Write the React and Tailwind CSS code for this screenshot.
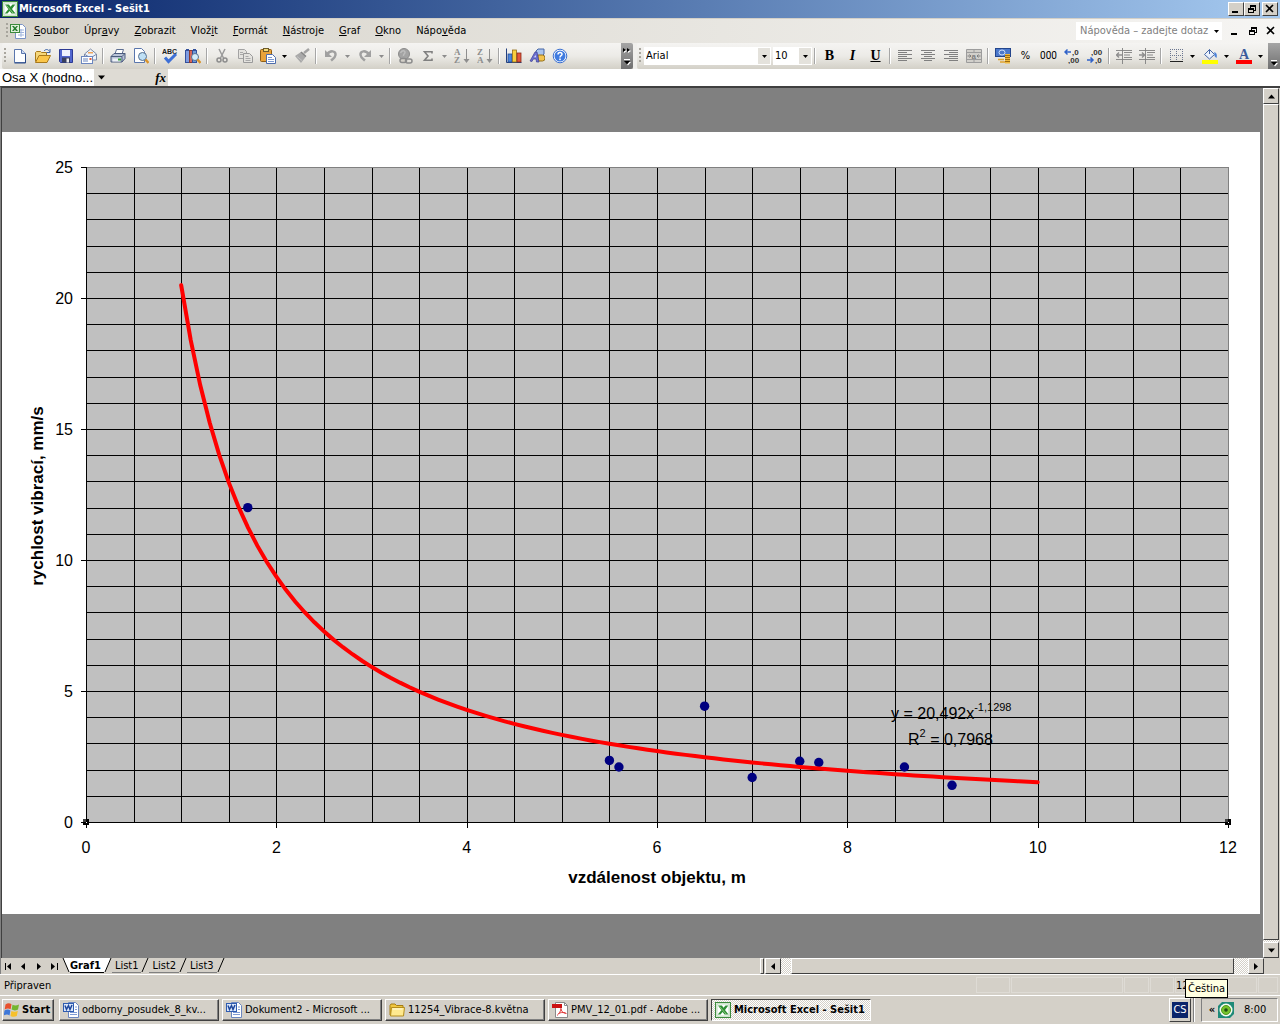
import React, { useState } from "react";

const raised = "border border-t-white border-l-white border-r-[#404040] border-b-[#404040] bg-[#d4d0c8]";
const checker = "bg-[repeating-conic-gradient(#ffffff_0_25%,#d4d0c8_0_50%)] bg-[length:2px_2px]";

const Icon = ({ children, size = 16, box = 16 }) => (
  <svg width={size} height={size} viewBox={`0 0 ${box} ${box}`} fill="none" className="shrink-0" aria-hidden="true">
    {children}
  </svg>
);

const ExcelIcon = ({ size = 16 }) => (
  <Icon size={size}>
    <rect x="0.5" y="0.5" width="15" height="15" fill="#e6f2e2" stroke="#3c8a3c" />
    <rect x="2" y="2" width="12" height="12" fill="#fff" stroke="#9cc79a" strokeWidth="0.6" />
    <path d="M3 3.500h4l1.500 2.300L10.500 3.500h2.800L10 8l3.500 4.500H9.500L7.600 10 5.500 12.500H2.700L6.400 8.200z" fill="#2f8f35" />
    <path d="M4.500 4.500l6.500 7.500" stroke="#8cca7c" />
  </Icon>
);

const WorkbookIcon = () => (
  <Icon>
    <path d="M5.500 1.500h7l3 3v11h-10z" fill="#fff" stroke="#7a93c6" />
    <path d="M8 7h6M8 9.500h6M8 12h6M11 6v8" stroke="#9fb4dc" />
    <rect x="0.500" y="1.500" width="9" height="8" fill="#dff0da" stroke="#3c8a3c" />
    <path d="M2 3h2l1 1.500L6.500 3H8L6 5.500 8 8H6L5 6.700 3.700 8H2l2-2.500z" fill="#237a2b" />
  </Icon>
);

const WordIcon = () => (
  <Icon>
    <path d="M5.500 0.500h7l3 3v12h-10z" fill="#fff" stroke="#6b86bf" />
    <path d="M12 5h2M12 7.500h2M7 10.500h7M7 12.500h7" stroke="#7f9bd4" />
    <rect x="0.500" y="1.500" width="10" height="8" fill="#dbe7fa" stroke="#2f5cb0" />
    <path d="M2 3.500l1.500 4 2-4 1.500 4 2-4.500" stroke="#1d469c" strokeWidth="1.500" />
  </Icon>
);

const FolderIcon = () => (
  <Icon>
    <path d="M1 3.500l1-1.500h4l1.500 1.500H14V13H1z" fill="#f0c63e" stroke="#a67c12" />
    <path d="M2.500 5.500h13L14.500 14H1.500z" fill="#ffe98f" stroke="#b58d1d" />
    <path d="M3.500 7h10" stroke="#fffbe0" />
  </Icon>
);

const PdfIcon = () => (
  <Icon>
    <path d="M3.500 0.500h9l3 3v12h-12z" fill="#fff" stroke="#8a8a8a" />
    <path d="M12.500 0.500v3h3" stroke="#8a8a8a" />
    <rect x="0" y="2" width="10" height="4" fill="#cc1111" />
    <path d="M9 6c0 3-2 6-4 7.500M9 7c.5 3 3 4.500 5.500 4.500M6.500 11.500c2-1 4-1.200 7-.8" stroke="#e23b3b" />
  </Icon>
);

const WindowsIcon = () => (
  <Icon>
    <path d="M1.500 2.500C3.500 1 5.500 1 7.500 2.200L6.600 7.300C4.800 6.200 3 6.200.7 7.400z" fill="#e8502c" />
    <path d="M8.500 2.700c2 1.100 4 1.100 6.500-.2l-1 5c-2.200 1.200-4.300 1.200-6.400.1z" fill="#74b62e" />
    <path d="M.5 8.500c2.300-1.200 4.200-1.200 5.900-.1l-.9 5C3.700 12.200 2 12.400-.3 13.500z" fill="#3f78d8" />
    <path d="M7.400 8.900c2.100 1 4.200 1 6.400-.1l-1 5.200c-2.200 1.100-4.300 1-6.300-.1z" fill="#f6c02c" />
  </Icon>
);

const NewIcon = () => (
  <Icon>
    <path d="M2.500 1.500h7l4 4v9h-11z" fill="#fdfeff" stroke="#5a76ad" />
    <path d="M9.500 1.500v4h4" fill="#cfdcf3" stroke="#5a76ad" />
    <path d="M13.500 6v9h-11" stroke="#2b4a86" />
  </Icon>
);

const OpenIcon = () => (
  <Icon>
    <path d="M.500 13.500v-9l1-1h4l1 1h5v3" fill="#f6d77a" stroke="#a8791b" />
    <path d="M.500 14.500l3.500-7h11.500l-3.500 7z" fill="#fbc64a" stroke="#a8791b" />
    <path d="M9 3c2-2.500 4.500-1.500 5.500.500M15 1v3.500h-3.500" stroke="#3e65a8" />
  </Icon>
);

const SaveIcon = () => (
  <Icon>
    <path d="M1.500 1.500h13v13h-12l-1-1z" fill="#5267cf" stroke="#2c3a94" />
    <rect x="4" y="2" width="8" height="6" fill="#eef3ff" />
    <rect x="4" y="9.500" width="8" height="5" fill="#39405e" />
    <rect x="8.500" y="10.500" width="2.500" height="4" fill="#f1f1f1" />
  </Icon>
);

const MailIcon = () => (
  <Icon>
    <path d="M3.500 6l6-5 6 5v6h-12z" fill="#eef2fa" stroke="#7d8aa5" />
    <path d="M4 6.500l5.500 3.500L15 6.500" stroke="#7d8aa5" />
    <rect x="7" y="4" width="5" height="1.500" fill="#f0a55a" />
    <rect x="0.500" y="8.500" width="11" height="7" fill="#fff" stroke="#6b86bf" />
    <path d="M2 11h5M2 13h5" stroke="#6b86bf" />
    <rect x="8.500" y="10" width="2" height="2" fill="#e05c3a" />
  </Icon>
);

const PrintIcon = () => (
  <Icon>
    <path d="M5 6l1.500-4.500h7L12 6z" fill="#fff" stroke="#5e6f93" />
    <path d="M1 8.500l3-3h11v5l-3 3.500H1z" fill="#b9c4d8" stroke="#4c5c7e" />
    <path d="M1 8.500h11l3-3M12 8.500V14" stroke="#4c5c7e" />
    <path d="M2.500 10.500h8v3h-8z" fill="#eef1f7" />
    <path d="M8 11.500h3" stroke="#36a336" strokeWidth="2" />
  </Icon>
);

const PreviewIcon = () => (
  <Icon>
    <path d="M1.500.500h7l3 3v11h-10z" fill="#fff" stroke="#5a76ad" />
    <circle cx="9.500" cy="8.500" r="4" fill="#bfe0f5" stroke="#56708f" />
    <path d="M12.500 11.500l3 3.500" stroke="#d9932b" strokeWidth="2.500" />
  </Icon>
);

const SpellIcon = () => (
  <Icon>
    <text x="0" y="6" fontSize="7" fontWeight="700" fontFamily="Liberation Sans, sans-serif" fill="#222">ABC</text>
    <path d="M3 9.500l3.500 4L14 6" stroke="#3d6fd6" strokeWidth="3" />
  </Icon>
);

const ResearchIcon = () => (
  <Icon>
    <path d="M1 1.500h3M8 1.500h3" stroke="#33509c" />
    <rect x="0.500" y="2.500" width="4" height="12" fill="#7f9be0" stroke="#33509c" />
    <rect x="4.500" y="2.500" width="3" height="12" fill="#d8695b" stroke="#8c3a30" />
    <rect x="7.500" y="2.500" width="4" height="12" fill="#6f9ad6" stroke="#33509c" />
    <circle cx="10" cy="9" r="3.500" fill="#d3ecfa" stroke="#56708f" />
    <path d="M12.500 11.500l3 3.500" stroke="#d9932b" strokeWidth="2.500" />
  </Icon>
);

const CutIcon = () => (
  <Icon>
    <path d="M5 1l4.500 9M11 1L6.500 10" stroke="#9a9a9a" strokeWidth="1.500" />
    <circle cx="5" cy="12" r="2" stroke="#8c8c8c" strokeWidth="1.500" />
    <circle cx="11" cy="12" r="2" stroke="#8c8c8c" strokeWidth="1.500" />
  </Icon>
);

const CopyIcon = () => (
  <Icon>
    <path d="M1.500 1.500h6l2 2v7h-8z" fill="#e4e3df" stroke="#a3a3a3" />
    <path d="M6.500 5.500h6l3 3v6h-9z" fill="#e4e3df" stroke="#9a9a9a" />
    <path d="M3 4.500h3M3 6.500h3M8.500 8.500h3M8.500 10.500h5M8.500 12.500h5" stroke="#a9a9a9" />
  </Icon>
);

const PasteIcon = () => (
  <Icon>
    <rect x="0.500" y="1.500" width="11" height="12" rx="1" fill="#e9a33a" stroke="#8f5f16" />
    <rect x="3.500" y="0.500" width="5" height="3" fill="#f3dc7c" stroke="#6d5a2a" />
    <path d="M6.500 6.500h6l3 3v6h-9z" fill="#fff" stroke="#4d6cab" />
    <path d="M8 9.500h4M8 11.500h6M8 13.500h6" stroke="#7b98d1" />
  </Icon>
);

const BrushIcon = () => (
  <Icon>
    <path d="M15 1l-5 4" stroke="#a3a3a3" strokeWidth="2.500" />
    <path d="M1 8l6-4 5 4.500-5 6.500z" fill="#a9a9a9" />
    <path d="M7 4l5 4.500" stroke="#858585" strokeWidth="1.500" />
    <path d="M3 8.500l5 4" stroke="#c2c2c2" />
  </Icon>
);

const UndoIcon = () => (
  <Icon>
    <path d="M4 6.500c3-4.500 9-4 8.500.500-.2 2.500-2 3.500-4.500 5.500" stroke="#a0a0a0" strokeWidth="2.500" />
    <path d="M2 2v7h7z" fill="#a0a0a0" />
  </Icon>
);

const RedoIcon = () => (
  <Icon>
    <path d="M12 6.500C9 2 3 2.500 3.500 7c.2 2.500 2 3.500 4.500 5.500" stroke="#a0a0a0" strokeWidth="2.500" />
    <path d="M14 2v7H7z" fill="#a0a0a0" />
  </Icon>
);

const LinkIcon = () => (
  <Icon>
    <circle cx="7" cy="6" r="5.500" fill="#a3a3a3" stroke="#8b8b8b" />
    <path d="M3.500 5c1.500-3 4-2.500 4.500-1s-2 2-1.500 4" stroke="#bdbdbd" strokeWidth="1.500" />
    <rect x="3" y="10.500" width="6.500" height="4" rx="2" fill="#d4d0c8" stroke="#8c8c8c" strokeWidth="1.500" />
    <rect x="8.500" y="11" width="6.500" height="4" rx="2" stroke="#8c8c8c" strokeWidth="1.500" />
  </Icon>
);

const SumIcon = () => (
  <Icon>
    <path d="M12 5.500V3.800H4.500L8 8l-3.500 4.200H12v-1.700" stroke="#808080" strokeWidth="1.600" />
  </Icon>
);

const SortIcon = ({ top, bottom }) => (
  <Icon>
    <text x="0" y="7" fontSize="9" fontWeight="700" fontFamily="Liberation Serif, serif" fill="#8e8e8e">{top}</text>
    <text x="0" y="15" fontSize="9" fontWeight="700" fontFamily="Liberation Serif, serif" fill="#8e8e8e">{bottom}</text>
    <path d="M12.500 1v12" stroke="#8e8e8e" />
    <path d="M9.500 11h6l-3 4z" fill="#8e8e8e" />
  </Icon>
);

const ChartIcon = () => (
  <Icon>
    <path d="M0.500 0.500v14h15" stroke="#23407e" />
    <rect x="2" y="6" width="4" height="8" fill="#4c86dc" stroke="#234c94" strokeWidth="0.800" />
    <rect x="6.500" y="2" width="4" height="12" fill="#f8cf3f" stroke="#94701b" strokeWidth="0.800" />
    <rect x="11" y="5" width="4" height="9" fill="#e2553a" stroke="#8c2a1a" strokeWidth="0.800" />
  </Icon>
);

const DrawIcon = () => (
  <Icon>
    <path d="M7 3l2-2h6v5l-2 2H7z" fill="#aac4ee" stroke="#4667a6" />
    <path d="M9 7h4.500a2.500 3 0 010 6H9z" fill="#f3c34e" stroke="#94701b" />
    <path d="M1 13L6 4h2l2 10H7.500l-.4-3H4.300L3 13.500z" fill="#6b6fd0" stroke="#3c3f94" strokeWidth="0.700" />
    <path d="M5.200 9.200h1.600L6.500 7z" fill="#fff" />
  </Icon>
);

const HelpIcon = () => (
  <Icon>
    <circle cx="8" cy="8" r="6.800" fill="#fff" stroke="#3a6fd0" />
    <circle cx="8" cy="8" r="5.500" fill="#3f7be0" />
    <path d="M6 6.500C6 4 10 4 10 6.200 10 7.800 8 7.600 8 9.500" stroke="#fff" strokeWidth="1.500" />
    <rect x="7.200" y="10.500" width="1.600" height="1.600" fill="#fff" />
  </Icon>
);

const AlignIcon = ({ d }) => (
  <Icon>
    <path d={d} stroke="#808080" />
  </Icon>
);

const MergeIcon = () => (
  <Icon>
    <path d="M.500 1.500h15v13H.500zM.500 4.500h15M.500 11.500h15M8 1.500v3M8 11.500v3" fill="#d2d0cb" stroke="#9c9c9c" />
    <path d="M1.500 8H5M11 8h3.500M3.500 6.500L5 8 3.500 9.500M12.500 6.500L11 8l1.500 1.500" stroke="#7e7e7e" />
    <text x="5.500" y="10.500" fontSize="8" fontWeight="700" fontFamily="Liberation Sans, sans-serif" fill="#7e7e7e">a</text>
  </Icon>
);

const MoneyIcon = () => (
  <Icon>
    <rect x="0.500" y="0.500" width="15" height="8" fill="#4b78cb" stroke="#24468c" />
    <ellipse cx="7" cy="4.500" rx="3" ry="2.500" stroke="#cfe0fa" />
    <path d="M10 6h5v9.500h-5z" fill="#f0b93c" />
    <path d="M10 7.500h5M10 9.500h5M10 11.500h5M10 13.500h5" stroke="#9b6b12" />
    <path d="M3 11.500h6M5 14h5" stroke="#e0a32b" strokeWidth="1.500" />
  </Icon>
);

const DecimalIcon = ({ more }) => (
  <Icon>
    <text x={more ? 8 : 4} y="7" fontSize="8" fontFamily="Liberation Sans, sans-serif" fontWeight="700" fill="#333">{more ? ",0" : ",00"}</text>
    <text x={more ? 4 : 8} y="15" fontSize="8" fontFamily="Liberation Sans, sans-serif" fontWeight="700" fill="#333">{more ? ",00" : ",0"}</text>
    {more ? (
      <path d="M7 4H1M3.500 1.500L1 4l2.500 2.500" stroke="#2f62c9" strokeWidth="1.500" />
    ) : (
      <path d="M0 12h6M3.500 9.500L6 12l-2.500 2.500" stroke="#2f62c9" strokeWidth="1.500" />
    )}
  </Icon>
);

const IndentIcon = ({ right }) => (
  <Icon>
    <path d="M0 2.500h16M8 4.500h8M8 7h6M8 9.500h8M0 11.500h16M6.500 0v16" stroke="#808080" strokeWidth="0.900" />
    <path d={right ? "M0 7h5M3 4.500L5.500 7 3 9.500" : "M6 7H1M3 4.500L.5 7 3 9.500"} stroke="#8e8e8e" strokeWidth="1.500" />
  </Icon>
);

const BordersIcon = () => (
  <Icon>
    <path d="M2 1.500h12M2 7.500h12" stroke="#6b7690" strokeDasharray="1 1" />
    <path d="M2.500 1v12M8.500 1v12M14.500 1v12" stroke="#6b7690" strokeDasharray="1 1" />
    <path d="M2 13.500h13" stroke="#222" />
  </Icon>
);

const FillIcon = () => (
  <Icon>
    <path d="M2.500 6.500l5-5 5 5-5 4.500z" fill="#eaf1fc" stroke="#4667a6" />
    <path d="M7.500 1.500V6" stroke="#4667a6" />
    <path d="M12 4c2.500.500 3.500 3 2.500 6-2-1-2.500-3-2-5" fill="#4d83d9" />
    <rect x="0" y="12" width="16" height="4" fill="#ffff00" />
  </Icon>
);

const FontColorIcon = () => (
  <Icon>
    <text x="3" y="11" fontSize="14" fontWeight="700" fontFamily="Liberation Serif, serif" fill="#3a5a9c">A</text>
    <rect x="0" y="12" width="16" height="4" fill="#ff0000" />
  </Icon>
);

const TrayIcon = () => (
  <Icon>
    <path d="M4 0h12v12l-4 4H0V4z" fill="#1f8a78" />
    <circle cx="8" cy="8" r="6.500" fill="#f4fbf0" />
    <circle cx="8" cy="8" r="4.500" fill="#76c22c" stroke="#4d9a1f" />
    <circle cx="8" cy="8" r="1.800" fill="#1e4d14" />
  </Icon>
);

const arrows = {
  down: "M0 0h7L3.500 4z",
  up: "M0 4h7L3.500 0z",
  left: "M5 0v7L1 3.500z",
  right: "M1 0v7l4-3.500z",
};

const Arrow = ({ dir = "down", size = 7, color = "#000" }) => (
  <svg width={size} height={size} viewBox={dir === "down" || dir === "up" ? "0 -1.500 7 7" : "0 0 7 7"} aria-hidden="true">
    <path d={arrows[dir]} fill={color} />
  </svg>
);

const ToolButton = ({ label, children }) => (
  <button type="button" aria-label={label} className="w-[23px] h-6 flex items-center justify-center shrink-0">
    {children}
  </button>
);

const DropArrow = ({ label, color }) => (
  <button type="button" aria-label={label} className="w-[11px] h-6 flex items-center justify-center shrink-0">
    <Arrow size={5} color={color} />
  </button>
);

const Separator = () => (
  <div className="w-1.5 h-6 flex items-center justify-center shrink-0">
    <div className="w-0.5 h-4 bg-[#a6a6a6] border-r border-white" />
  </div>
);

const Grip = () => (
  <div className="w-0.5 mx-0.5 h-4 shrink-0 bg-[repeating-linear-gradient(#a8a59d_0_2px,transparent_2px_4px)]" />
);

const WindowGlyph = ({ type }) => (
  <svg width="10" height="10" viewBox="0 0 10 10" fill="none" stroke="#000" shapeRendering="crispEdges" aria-hidden="true">
    {type === "min" && <path d="M1 8h6" strokeWidth="2" />}
    {type === "restore" && (
      <>
        <path d="M3.500 4V1.500h5v5H7M3 2h6" />
        <path d="M1.500 4.500h5v4h-5zM1 5h6" />
      </>
    )}
    {type === "close" && <path d="M1 1l7 7M8 1L1 8" strokeWidth="1.600" shapeRendering="auto" />}
  </svg>
);

const menus = [
  ["", "S", "oubor"],
  ["Úpr", "a", "vy"],
  ["", "Z", "obrazit"],
  ["Vlož", "i", "t"],
  ["", "F", "ormát"],
  ["", "N", "ástroje"],
  ["", "G", "raf"],
  ["", "O", "kno"],
  ["Nápo", "v", "ěda"],
];

// Chart geometry, in the units of the viewBox
const plot = { left: 84, top: 35, width: 1142, height: 655 };
const maxX = 12;
const maxY = 25;
const px = (x) => plot.left + (x / maxX) * plot.width;
const py = (y) => plot.top + plot.height - (y / maxY) * plot.height;

const points = [
  [1.7, 12], [5.5, 2.35], [5.6, 2.1], [6.5, 4.42], [7, 1.7],
  [7.5, 2.32], [7.7, 2.27], [8.6, 2.1], [9.1, 1.4],
];

const trend = Array.from({ length: 91 }, (_, i) => {
  const x = 1 + i * 0.1;
  return `${px(x)},${py(20.492 * Math.pow(x, -1.1298))}`;
}).join(" ");

const Chart = () => (
  <svg viewBox="0 0 1258 782" className="block w-full bg-white font-['Liberation_Sans',sans-serif]" role="img" aria-label="rychlost vibrací">
    <rect x={plot.left} y={plot.top} width={plot.width} height={plot.height} fill="#c0c0c0" />
    <g stroke="#000" shapeRendering="crispEdges">
      {Array.from({ length: 24 }, (_, i) => {
        const x = Math.round(px(i * 0.5)) + 0.5;
        return <line key={i} x1={x} x2={x} y1={plot.top} y2={plot.top + plot.height} />;
      })}
      {Array.from({ length: 25 }, (_, i) => {
        const y = Math.round(py(i)) + 0.5;
        return <line key={i} x1={plot.left} x2={plot.left + plot.width} y1={y} y2={y} />;
      })}
      {[0, 2, 4, 6, 8, 10, 12].map((v) => {
        const x = Math.round(px(v)) + 0.5;
        return <line key={v} x1={x} x2={x} y1={plot.top + plot.height} y2={plot.top + plot.height + 6} />;
      })}
      {[0, 5, 10, 15, 20, 25].map((v) => {
        const y = Math.round(py(v)) + 0.5;
        return <line key={v} x1={plot.left - 5} x2={plot.left} y1={y} y2={y} />;
      })}
      <path d="M84.500 35.500H1226.500V690" fill="none" stroke="#808080" />
    </g>
    <g fontSize="16" fill="#000">
      {[0, 2, 4, 6, 8, 10, 12].map((v) => (
        <text key={v} x={px(v)} y="721" textAnchor="middle">{v}</text>
      ))}
      {[0, 5, 10, 15, 20, 25].map((v) => (
        <text key={v} x="71" y={py(v) + 6} textAnchor="end">{v}</text>
      ))}
      <text x="655" y="751" textAnchor="middle" fontSize="17" fontWeight="700">vzdálenost objektu, m</text>
      <text transform="translate(41 364) rotate(-90)" textAnchor="middle" fontSize="17" fontWeight="700">rychlost vibrací, mm/s</text>
      <text x="889" y="587">y = 20,492x<tspan dy="-8" fontSize="11">-1,1298</tspan></text>
      <text x="906" y="613">R<tspan dy="-8" fontSize="11">2</tspan><tspan dy="8"> = 0,7968</tspan></text>
    </g>
    {points.map(([x, y]) => (
      <circle key={x} cx={px(x)} cy={py(y)} r="4.700" fill="#000080" />
    ))}
    <polyline points={trend} fill="none" stroke="#ff0000" strokeWidth="4" strokeLinecap="round" />
    <g shapeRendering="crispEdges">
      {[84, 1226].map((x) => (
        <g key={x}>
          <rect x={x - 3} y="687" width="6" height="6" fill="#000" />
          <rect x={x - 3} y="687" width="3" height="3" fill="#404040" />
          <rect x={x} y="690" width="1" height="1" fill="#fff" />
        </g>
      ))}
    </g>
  </svg>
);

const ScrollButton = ({ dir, label }) => (
  <button type="button" aria-label={label} className={`${raised} w-4 h-4 shrink-0 flex items-center justify-center`}>
    <Arrow dir={dir} />
  </button>
);

const SheetNav = ({ label, dir, bar }) => (
  <button type="button" aria-label={label} className="w-4 h-4 flex items-center justify-center">
    {bar === "left" && <span className="w-px h-[7px] bg-black" />}
    <Arrow dir={dir} />
    {bar === "right" && <span className="w-px h-[7px] bg-black" />}
  </button>
);

const Slash = ({ left, right, back }) => (
  <svg width="8" height="15" viewBox="0 0 8 15" aria-hidden="true">
    {left && <path d="M0 0h7L1 14H0z" fill="#fff" />}
    {right && <path d="M8 0H1l6 14h1z" fill="#fff" />}
    <path d={back ? "M1 0l6 14" : "M7 0L1 14"} stroke="#000" fill="none" />
  </svg>
);

const tasks = [
  { label: "odborny_posudek_8_kv...", icon: WordIcon },
  { label: "Dokument2 - Microsoft ...", icon: WordIcon },
  { label: "11254_Vibrace-8.května", icon: FolderIcon },
  { label: "PMV_12_01.pdf - Adobe ...", icon: PdfIcon },
  { label: "Microsoft Excel - Sešit1", icon: ExcelIcon, active: true },
];

const sheets = ["Graf1", "List1", "List2", "List3"];

const toolbar = "h-[26px] flex items-center bg-linear-to-b from-[#f5f4f2] via-[#ecebe7] to-[#d3d0c7] rounded-l-xs";

export default function App() {
  const [font, setFont] = useState("Arial");
  const [size, setSize] = useState("10");
  const [cell, setCell] = useState("Osa X (hodno...");
  const [formula, setFormula] = useState("");
  const [question, setQuestion] = useState("Nápověda – zadejte dotaz");
  const [sheet, setSheet] = useState("Graf1");

  return (
    <div className="min-h-screen flex flex-col bg-[#d4d0c8] text-black text-[11px] leading-4 font-['DejaVu_Sans_Condensed','DejaVu_Sans',sans-serif]">
      {/* Title bar */}
      <header className="h-[18px] flex items-center pl-0.5 pr-0.5 bg-linear-to-r from-[#0a246a] to-[#a6caf0]">
        <ExcelIcon />
        <h1 className="flex-1 pl-px text-white font-bold">Microsoft Excel - Sešit1</h1>
        <div className="flex">
          <button type="button" aria-label="Minimalizovat" className={`${raised} w-4 h-3.5 flex items-center justify-center`}><WindowGlyph type="min" /></button>
          <button type="button" aria-label="Obnovit" className={`${raised} w-4 h-3.5 flex items-center justify-center`}><WindowGlyph type="restore" /></button>
          <button type="button" aria-label="Zavřít" className={`${raised} w-4 h-3.5 ml-0.5 flex items-center justify-center`}><WindowGlyph type="close" /></button>
        </div>
      </header>

      {/* Menu bar */}
      <div className="h-[25px] flex items-center pl-1 pr-1 border-t border-[#d4d0c8] bg-linear-to-r from-[#d6d3ca] to-[#f6f5f3]">
        <Grip />
        <WorkbookIcon />
        <nav className="flex-1 flex pl-px">
          {menus.map(([before, key, after]) => (
            <button key={before + key + after} type="button" className="pl-[7px] pr-2">
              {before}<span className="underline">{key}</span>{after}
            </button>
          ))}
        </nav>
        <div className="flex h-[18px] items-center bg-white mr-2">
          <input aria-label="Nápověda" className="w-[135px] pl-1 text-[#808080] bg-transparent outline-none" value={question} onChange={(e) => setQuestion(e.target.value)} />
          <DropArrow label="Předchozí dotazy" />
        </div>
        <div className="flex gap-2">
          <button type="button" aria-label="Minimalizovat sešit"><WindowGlyph type="min" /></button>
          <button type="button" aria-label="Obnovit sešit"><WindowGlyph type="restore" /></button>
          <button type="button" aria-label="Zavřít sešit"><WindowGlyph type="close" /></button>
        </div>
      </div>

      {/* Toolbars */}
      <div className="flex bg-[#f0efec] pl-0.5">
        <div className={`${toolbar} flex-1`}>
          <Grip />
          <ToolButton label="Nový"><NewIcon /></ToolButton>
          <ToolButton label="Otevřít"><OpenIcon /></ToolButton>
          <ToolButton label="Uložit"><SaveIcon /></ToolButton>
          <ToolButton label="E-mail"><MailIcon /></ToolButton>
          <Separator />
          <ToolButton label="Tisk"><PrintIcon /></ToolButton>
          <ToolButton label="Náhled"><PreviewIcon /></ToolButton>
          <Separator />
          <ToolButton label="Pravopis"><SpellIcon /></ToolButton>
          <ToolButton label="Zdroje informací"><ResearchIcon /></ToolButton>
          <Separator />
          <ToolButton label="Vyjmout"><CutIcon /></ToolButton>
          <ToolButton label="Kopírovat"><CopyIcon /></ToolButton>
          <ToolButton label="Vložit"><PasteIcon /></ToolButton>
          <DropArrow label="Možnosti vložení" />
          <ToolButton label="Kopírovat formát"><BrushIcon /></ToolButton>
          <Separator />
          <ToolButton label="Zpět"><UndoIcon /></ToolButton>
          <DropArrow label="Historie zpět" color="#8c8c8c" />
          <ToolButton label="Znovu"><RedoIcon /></ToolButton>
          <DropArrow label="Historie znovu" color="#8c8c8c" />
          <Separator />
          <ToolButton label="Hypertextový odkaz"><LinkIcon /></ToolButton>
          <ToolButton label="Součet"><SumIcon /></ToolButton>
          <DropArrow label="Funkce" color="#8c8c8c" />
          <ToolButton label="Seřadit vzestupně"><SortIcon top="A" bottom="Z" /></ToolButton>
          <ToolButton label="Seřadit sestupně"><SortIcon top="Z" bottom="A" /></ToolButton>
          <Separator />
          <ToolButton label="Průvodce grafem"><ChartIcon /></ToolButton>
          <ToolButton label="Kreslení"><DrawIcon /></ToolButton>
          <ToolButton label="Nápověda"><HelpIcon /></ToolButton>
          <button type="button" aria-label="Možnosti panelu" className="ml-auto w-3 h-full rounded-r-xs bg-linear-to-b from-[#a5a5a5] to-[#707070] flex items-center justify-center">
            <svg width="8" height="20" viewBox="0 0 8 20" aria-hidden="true">
              <path d="M1 3l3 2-3 2zM5 3l3 2-3 2z" fill="#fff" />
              <path d="M0 2l3 2-3 2zM4 2l3 2-3 2z" fill="#000" />
              <path d="M1 13.500h6" stroke="#fff" />
              <path d="M2 16h6l-3 3.500z" fill="#fff" />
              <path d="M1 15h6l-3 3.500z" fill="#000" />
            </svg>
          </button>
        </div>
        <div className={`${toolbar} ml-1`}>
          <Grip />
          <div className="flex h-[18px] bg-white ml-px mr-0.5">
            <select aria-label="Písmo" className="appearance-none w-[114px] pl-0.5 bg-white outline-none" value={font} onChange={(e) => setFont(e.target.value)}>
              <option>Arial</option>
            </select>
            <span className="w-3 m-px ml-0 bg-[#e4e2dc] flex items-center justify-center"><Arrow size={5} /></span>
          </div>
          <div className="flex h-[18px] bg-white">
            <select aria-label="Velikost písma" className="appearance-none w-[26px] pl-0.5 bg-white outline-none" value={size} onChange={(e) => setSize(e.target.value)}>
              <option>10</option>
            </select>
            <span className="w-3 m-px ml-0 bg-[#e4e2dc] flex items-center justify-center"><Arrow size={5} /></span>
          </div>
          <Separator />
          <ToolButton label="Tučné"><span className="font-['Liberation_Serif',serif] text-[14px] font-black">B</span></ToolButton>
          <ToolButton label="Kurzíva"><span className="font-['Liberation_Serif',serif] text-[14px] font-bold italic">I</span></ToolButton>
          <ToolButton label="Podtržené"><span className="font-['Liberation_Serif',serif] text-[14px] font-bold underline">U</span></ToolButton>
          <Separator />
          <ToolButton label="Vlevo"><AlignIcon d="M1 2.500h14M1 4.500h9M1 6.500h14M1 8.500h9M1 10.500h14M1 12.500h9" /></ToolButton>
          <ToolButton label="Na střed"><AlignIcon d="M1 2.500h14M4 4.500h8M1 6.500h14M4 8.500h8M1 10.500h14M4 12.500h8" /></ToolButton>
          <ToolButton label="Vpravo"><AlignIcon d="M1 2.500h14M6 4.500h9M1 6.500h14M6 8.500h9M1 10.500h14M6 12.500h9" /></ToolButton>
          <ToolButton label="Sloučit"><MergeIcon /></ToolButton>
          <Separator />
          <ToolButton label="Měna"><MoneyIcon /></ToolButton>
          <ToolButton label="Procenta"><span className="text-[11px]">%</span></ToolButton>
          <ToolButton label="Oddělovač tisíců"><span className="font-['Roboto',sans-serif] text-[10px]">000</span></ToolButton>
          <ToolButton label="Přidat desetinné místo"><DecimalIcon more /></ToolButton>
          <ToolButton label="Odebrat desetinné místo"><DecimalIcon /></ToolButton>
          <Separator />
          <ToolButton label="Zmenšit odsazení"><IndentIcon /></ToolButton>
          <ToolButton label="Zvětšit odsazení"><IndentIcon right /></ToolButton>
          <Separator />
          <ToolButton label="Ohraničení"><BordersIcon /></ToolButton>
          <DropArrow label="Druh ohraničení" />
          <ToolButton label="Barva výplně"><FillIcon /></ToolButton>
          <DropArrow label="Výběr výplně" />
          <ToolButton label="Barva písma"><FontColorIcon /></ToolButton>
          <DropArrow label="Výběr barvy písma" />
          <button type="button" aria-label="Možnosti formátu" className="ml-0.5 w-3 h-full bg-linear-to-b from-[#a5a5a5] to-[#707070] flex items-end justify-center pb-0.5">
            <svg width="8" height="8" viewBox="0 0 8 8" aria-hidden="true">
              <path d="M1 1.500h6" stroke="#fff" />
              <path d="M2 4h6L5 7.500z" fill="#fff" />
              <path d="M1 3h6L4 6.500z" fill="#000" />
            </svg>
          </button>
        </div>
      </div>

      {/* Formula bar */}
      <div className="h-[17px] flex bg-white">
        <input aria-label="Pole názvů" className="w-[94px] pl-0.5 font-['Liberation_Sans',sans-serif] text-[13px] outline-none" value={cell} onChange={(e) => setCell(e.target.value)} />
        <div className="w-[74px] flex items-center justify-between bg-[#dedbd4] pl-1 pr-0.5">
          <button type="button" aria-label="Seznam názvů"><Arrow /></button>
          <button type="button" aria-label="Vložit funkci" className="font-['Liberation_Serif',serif] text-[13px] font-bold italic">fx</button>
        </div>
        <input aria-label="Řádek vzorců" className="flex-1 outline-none" value={formula} onChange={(e) => setFormula(e.target.value)} />
      </div>

      {/* Chart sheet */}
      <main className="flex-1 flex border-t-2 border-t-[#404040] border-l border-l-[#808080] pr-px">
        <div className="flex-1 flex flex-col justify-center bg-[#808080] border-l border-l-[#404040] pr-[3px]">
          <Chart />
        </div>
        <div className={`w-4 flex flex-col ${checker}`}>
          <ScrollButton dir="up" label="Nahoru" />
          <div className={`${raised} flex-1 mb-0.5`} />
          <ScrollButton dir="down" label="Dolů" />
        </div>
      </main>

      {/* Sheet tabs and horizontal scroll bar */}
      <div className="h-4 flex items-start pr-4">
        <div className="flex w-[62px] border-l border-[#808080]">
          <SheetNav label="První list" dir="left" bar="left" />
          <SheetNav label="Předchozí list" dir="left" />
          <SheetNav label="Další list" dir="right" />
          <SheetNav label="Poslední list" dir="right" bar="right" />
        </div>
        <div className="flex flex-1">
          <Slash back right={sheet === sheets[0]} />
          {sheets.map((name) => (
            <React.Fragment key={name}>
              <button
                type="button"
                onClick={() => setSheet(name)}
                className={`h-[15px] leading-[15px] ${name === sheet ? "pr-[3px] bg-white font-bold border-b border-black" : "px-[3px] border-b border-[#808080]"}`}
              >
                {name}
              </button>
              <Slash left={name === sheet} />
            </React.Fragment>
          ))}
        </div>
        <div className={`${raised} w-1 h-4 mr-px`} />
        <div className={`flex w-[499px] ${checker}`}>
          <ScrollButton dir="left" label="Vlevo" />
          <div className={`${raised} flex-1 ml-2.5 mr-3.5`} />
          <ScrollButton dir="right" label="Vpravo" />
        </div>
      </div>

      {/* Status bar */}
      <div className="h-[21px] flex items-center pl-1 pr-0.5 border-t border-white">
        <span className="flex-1 pt-0.5">Připraven</span>
        <div className="flex gap-px h-4 *:border *:border-[#dedbd5]">
          <span className="w-[34px]" />
          <span className="w-28" />
          <span className="w-[25px]" />
          <span className="w-6" />
          <span className="w-[52px] leading-4">12</span>
          <span className="w-[29px]" />
          <span className="w-5" />
        </div>
      </div>

      {/* Windows taskbar */}
      <footer className="h-[29px] flex items-center pl-0.5 pr-0.5 border-t border-white">
        <button type="button" className={`${raised} h-[22px] w-[52px] mr-[5px] flex items-center gap-0.5 pl-px font-bold shadow-[inset_-1px_-1px_#808080]`}>
          <WindowsIcon />
          Start
        </button>
        <div className="flex-1 flex gap-[3px]">
          {tasks.map(({ label, icon: TaskIcon, active }) => (
            <button
              key={label}
              type="button"
              className={`h-[22px] w-40 flex items-center gap-[3px] pl-[3px] whitespace-nowrap ${
                active
                  ? `border border-t-[#404040] border-l-[#404040] border-r-white border-b-white font-bold ${checker}`
                  : `${raised} shadow-[inset_-1px_-1px_#808080]`
              }`}
            >
              <TaskIcon />
              {label}
            </button>
          ))}
        </div>
        <div className="relative mr-0.5">
          <button type="button" aria-label="Jazyk: čeština" className={`${raised} w-[22px] h-6 flex items-center justify-center`}>
            <span className="w-4 h-4 bg-[#0a246a] text-white text-center">CS</span>
          </button>
          <span role="tooltip" className="absolute left-4 bottom-full h-[19px] px-0.5 border border-black bg-[#ffffe1] leading-[17px]">Čeština</span>
        </div>
        <div className="w-0.5 h-6 mr-1.5 border-l border-[#808080] bg-white" />
        <div className="h-6 w-[77px] flex items-center border border-t-[#808080] border-l-[#808080] border-r-white border-b-white pl-1">
          <button type="button" aria-label="Zobrazit skryté ikony" className="w-3 font-bold">«</button>
          <TrayIcon />
          <span className="pl-2.5">8:00</span>
        </div>
      </footer>
    </div>
  );
}
